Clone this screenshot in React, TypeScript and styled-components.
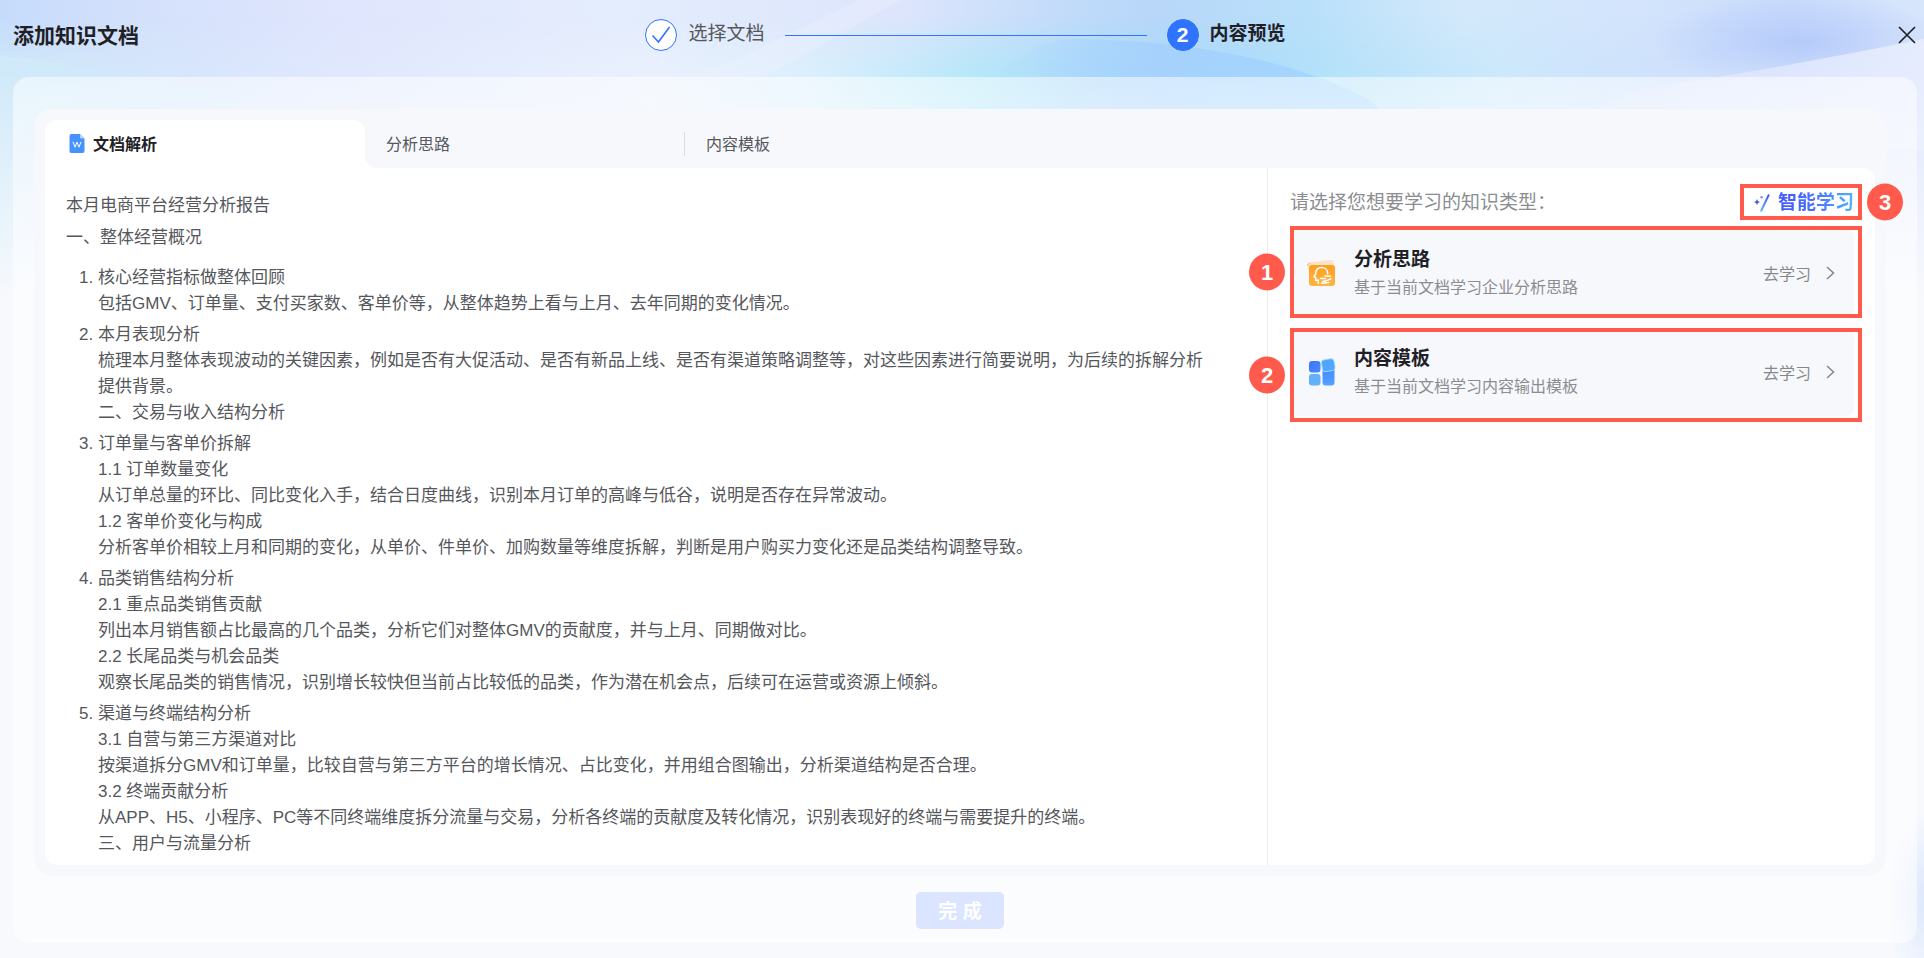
import React, { useState } from "react";
import styled, { createGlobalStyle, css } from "styled-components";

const GlobalStyle = createGlobalStyle`
  *, *::before, *::after { box-sizing: border-box; }
  body {
    margin: 0;
    background: #f7f9fd;
    color: #1f2126;
    font-family: "Liberation Sans", "Noto Sans CJK SC", sans-serif;
    font-size: 17px;
  }
  button { font: inherit; color: inherit; border: 0; padding: 0; background: none; cursor: pointer; }
  h1, h2, h3, p, ol { margin: 0; padding: 0; font-weight: 400; font-size: inherit; }
`;

const Page = styled.div`
  position: relative;
  min-height: 100vh;
  display: flex;
  flex-direction: column;
  isolation: isolate;
`;

const Backdrop = styled.svg`
  position: absolute;
  top: 0;
  left: 0;
  width: 100%;
  height: 100%;
  z-index: -1;
`;

const Header = styled.header`
  height: 77px;
  padding: 0 6px 7px 13px;
  display: grid;
  grid-template-columns: 1fr auto 1fr;
  align-items: center;
`;

const Title = styled.h1`
  padding-bottom: 3px;
  font-size: 21px;
  font-weight: 700;
`;

const Steps = styled.ol`
  display: flex;
  align-items: center;
  gap: 20px;
  list-style: none;
`;

const Step = styled.li<{ $current?: boolean }>`
  display: flex;
  align-items: center;
  gap: 11px;
  font-size: 19px;
  line-height: 32px;
  color: ${(p) => (p.$current ? "#1f2126" : "#55575c")};
  font-weight: ${(p) => (p.$current ? 700 : 400)};
`;

const StepLabel = styled.span`
  padding-bottom: 2px;
`;

const StepMark = styled.span<{ $current?: boolean }>`
  width: 32px;
  height: 32px;
  border-radius: 50%;
  border: 1px solid #2f73ff;
  background: ${(p) => (p.$current ? "#2f73ff" : "#fff")};
  color: #fff;
  font-size: 21px;
  font-weight: 700;
  display: flex;
  align-items: center;
  justify-content: center;
`;

const StepLine = styled.li`
  width: 362px;
  height: 1px;
  background: #2f73ff;
`;

const CloseButton = styled.button`
  justify-self: end;
  display: flex;
`;

const Shell = styled.main`
  flex: 1;
  margin: 0 7px 15px 13px;
  padding: 32px 31px 14px 21px;
  border-radius: 16px;
  background: rgba(255, 255, 255, 0.5);
  display: flex;
  flex-direction: column;
`;

const Workspace = styled.section`
  flex: 1;
  padding: 11px;
  border-radius: 18px;
  background: #f7f8fc;
  display: flex;
  flex-direction: column;
`;

const TabBar = styled.div`
  display: flex;
  height: 48px;
`;

const Tab = styled.button<{ $active?: boolean; $divided?: boolean }>`
  position: relative;
  width: 320px;
  padding: 0 21px 2px;
  display: flex;
  align-items: center;
  gap: 6px;
  font-size: 16px;
  color: #55575c;
  ${(p) =>
    p.$active &&
    css`
      background: #fff;
      color: #1f2126;
      font-weight: 700;
      border-radius: 12px 12px 0 0;
      &::after {
        content: "";
        position: absolute;
        left: 100%;
        bottom: 0;
        width: 12px;
        height: 12px;
        background: radial-gradient(circle at 100% 0, transparent 12px, #fff 12px);
      }
    `}
  ${(p) =>
    p.$divided &&
    css`
      &::after {
        content: "";
        position: absolute;
        right: 0;
        top: 12px;
        width: 1px;
        height: 24px;
        background: #dadce2;
      }
    `}
`;

const Panes = styled.div`
  flex: 1;
  display: grid;
  grid-template-columns: minmax(0, 1fr) 608px;
  background: #fff;
  border-radius: 0 12px 12px 12px;
`;

const Article = styled.article`
  padding: 25px 50px 7px 21px;
  font-size: 17px;
  line-height: 26px;
  color: #55575c;
`;

const Paragraph = styled.p`
  margin-bottom: 6px;
`;

const Outline = styled.ol`
  margin-top: 14px;
  padding-left: 32px;
  display: flex;
  flex-direction: column;
  gap: 5px;
`;

const OutlineLine = styled.span`
  display: block;
`;

const Learn = styled.aside`
  padding: 22px 21px 0 22px;
  border-left: 1px solid #ececef;
  display: flex;
  flex-direction: column;
`;

const LearnHead = styled.div`
  display: flex;
  justify-content: space-between;
  align-items: center;
  height: 26px;
  margin: 0 0 13px;
  color: #8b8d92;
`;

const LearnPrompt = styled.h2`
  font-size: 19px;
  line-height: 26px;
`;

const Marked = styled.div`
  position: relative;
`;

const SmartButton = styled.button`
  display: flex;
  align-items: center;
  gap: 7px;
  font-size: 19px;
  line-height: 26px;
  font-weight: 700;
`;

const SmartLabel = styled.span`
  color: transparent;
  background: linear-gradient(90deg, #4059ff, #4a6dff 45%, #4fb4ff);
  background-clip: text;
`;

const Cards = styled.div`
  display: flex;
  flex-direction: column;
  gap: 11px;
`;

const Card = styled.section`
  height: 88px;
  padding: 0 16px;
  border-radius: 8px;
  background: #f7f8fc;
  display: flex;
  align-items: center;
`;

const CardText = styled.div`
  flex: 1;
  margin-left: 18px;
`;

const CardTitle = styled.h3`
  font-size: 19px;
  line-height: 29px;
  font-weight: 700;
`;

const CardNote = styled.p`
  font-size: 16px;
  line-height: 28px;
  color: #8b8d92;
`;

const GoButton = styled.button`
  display: flex;
  align-items: center;
  gap: 11px;
  font-size: 16px;
  color: #85878c;
`;

const Callout = styled.div<{ $top: number; $bottom: number; $left?: number }>`
  position: absolute;
  top: ${(p) => -p.$top}px;
  right: -8px;
  bottom: ${(p) => -p.$bottom}px;
  left: ${(p) => -(p.$left ?? 0)}px;
  border: 4px solid #ff5a4c;
  pointer-events: none;
`;

const CalloutNumber = styled.span<{ $side: "left" | "right" }>`
  position: absolute;
  top: 50%;
  ${(p) => (p.$side === "left" ? "right" : "left")}: calc(100% + 9px);
  transform: translateY(-50%);
  width: 36px;
  height: 37px;
  border-radius: 50%;
  background: #ff5a4c;
  color: #fff;
  font-size: 22px;
  line-height: 38px;
  font-weight: 700;
  text-align: center;
`;

const Footer = styled.footer`
  padding-top: 16px;
  display: flex;
  justify-content: center;
`;

const DoneButton = styled.button`
  width: 88px;
  height: 37px;
  padding-bottom: 2px;
  border-radius: 5px;
  background: #dbe5ff;
  color: #fff;
  font-size: 19px;
  font-weight: 700;
`;

const sections: string[][] = [
  [
    "核心经营指标做整体回顾",
    "包括GMV、订单量、支付买家数、客单价等，从整体趋势上看与上月、去年同期的变化情况。",
  ],
  [
    "本月表现分析",
    "梳理本月整体表现波动的关键因素，例如是否有大促活动、是否有新品上线、是否有渠道策略调整等，对这些因素进行简要说明，为后续的拆解分析提供背景。",
    "二、交易与收入结构分析",
  ],
  [
    "订单量与客单价拆解",
    "1.1 订单数量变化",
    "从订单总量的环比、同比变化入手，结合日度曲线，识别本月订单的高峰与低谷，说明是否存在异常波动。",
    "1.2 客单价变化与构成",
    "分析客单价相较上月和同期的变化，从单价、件单价、加购数量等维度拆解，判断是用户购买力变化还是品类结构调整导致。",
  ],
  [
    "品类销售结构分析",
    "2.1 重点品类销售贡献",
    "列出本月销售额占比最高的几个品类，分析它们对整体GMV的贡献度，并与上月、同期做对比。",
    "2.2 长尾品类与机会品类",
    "观察长尾品类的销售情况，识别增长较快但当前占比较低的品类，作为潜在机会点，后续可在运营或资源上倾斜。",
  ],
  [
    "渠道与终端结构分析",
    "3.1 自营与第三方渠道对比",
    "按渠道拆分GMV和订单量，比较自营与第三方平台的增长情况、占比变化，并用组合图输出，分析渠道结构是否合理。",
    "3.2 终端贡献分析",
    "从APP、H5、小程序、PC等不同终端维度拆分流量与交易，分析各终端的贡献度及转化情况，识别表现好的终端与需要提升的终端。",
    "三、用户与流量分析",
  ],
];

const tabs = ["文档解析", "分析思路", "内容模板"];

function BackdropArt() {
  return (
    <Backdrop viewBox="0 0 1924 958" preserveAspectRatio="none" aria-hidden="true">
      <defs>
        <linearGradient id="sky">
          <stop offset="0" stopColor="#c6dbfb" />
          <stop offset="0.08" stopColor="#d5e1fc" />
          <stop offset="0.18" stopColor="#e0e6fd" />
          <stop offset="0.32" stopColor="#e4edfd" />
          <stop offset="0.47" stopColor="#dde5fc" />
          <stop offset="0.56" stopColor="#c0dbfa" />
          <stop offset="0.6" stopColor="#b8d7f9" />
          <stop offset="0.68" stopColor="#b9e0fa" />
          <stop offset="0.76" stopColor="#d3e9fb" />
          <stop offset="0.85" stopColor="#d3e4fc" />
          <stop offset="0.93" stopColor="#cbdcfc" />
          <stop offset="1" stopColor="#d8e6fc" />
        </linearGradient>
        <linearGradient id="horizon">
          <stop offset="0" stopColor="#d0eaf9" />
          <stop offset="0.1" stopColor="#d7e6fb" />
          <stop offset="0.18" stopColor="#e0e8fd" />
          <stop offset="0.34" stopColor="#eaf1fd" />
          <stop offset="0.42" stopColor="#daf0fc" />
          <stop offset="0.51" stopColor="#b2e7f8" />
          <stop offset="0.57" stopColor="#a9daf9" />
          <stop offset="0.65" stopColor="#aadcfb" />
          <stop offset="0.7" stopColor="#b5e2f9" />
          <stop offset="0.78" stopColor="#cbe8fb" />
          <stop offset="0.87" stopColor="#cfe0fc" />
          <stop offset="1" stopColor="#dfe7fd" />
        </linearGradient>
        <linearGradient id="descend" x1="0" y1="0" x2="0" y2="1">
          <stop offset="0.15" stopColor="#fff" stopOpacity="0" />
          <stop offset="0.8" stopColor="#fff" />
        </linearGradient>
        <mask id="descendMask">
          <rect width="1924" height="100" fill="url(#descend)" />
          <rect y="100" width="1924" height="300" fill="#fff" />
        </mask>
        <linearGradient id="settle" x1="0" y1="0" x2="0" y2="1">
          <stop offset="0" stopColor="#f7f9fd" stopOpacity="0" />
          <stop offset="1" stopColor="#f7f9fd" />
        </linearGradient>
        <linearGradient id="wave">
          <stop offset="0" stopColor="#9fd2fb" stopOpacity="0" />
          <stop offset="0.15" stopColor="#a3d2fd" stopOpacity="0.1" />
          <stop offset="0.45" stopColor="#a3cffd" stopOpacity="0.8" />
          <stop offset="1" stopColor="#a0d6ff" stopOpacity="0.9" />
        </linearGradient>
        <linearGradient id="ridge">
          <stop offset="0" stopColor="#dfe7fd" stopOpacity="0.2" />
          <stop offset="1" stopColor="#e6ecfe" />
        </linearGradient>
        <linearGradient id="mist" x1="0" y1="0" x2="0" y2="1">
          <stop offset="0" stopColor="#d0eafa" />
          <stop offset="1" stopColor="#d0eafa" stopOpacity="0.2" />
        </linearGradient>
        <radialGradient id="glow">
          <stop offset="0" stopColor="#dbe7fd" />
          <stop offset="1" stopColor="#dbe7fd" stopOpacity="0" />
        </radialGradient>
        <radialGradient id="shade">
          <stop offset="0" stopColor="#b5cbfa" />
          <stop offset="1" stopColor="#b5cbfa" stopOpacity="0" />
        </radialGradient>
      </defs>
      <rect width="1924" height="958" fill="#f7f9fd" />
      <rect width="1924" height="300" fill="url(#sky)" />
      <rect width="1924" height="300" fill="url(#horizon)" mask="url(#descendMask)" />
      <ellipse cx="1800" cy="42" rx="150" ry="48" fill="url(#shade)" />
      <path d="M0 56Q60 61 110 73T240 96V130H0Z" fill="url(#mist)" />
      <path d="M860 0 690 80H760L900 0Z" fill="#f3f2ff" opacity="0.3" />
      <path d="M960 130Q1010 39 1075 39Q1260 42 1370 100L1400 130Z" fill="url(#wave)" />
      <path d="M1640 90Q1790 66 1924 39V150H1500Z" fill="url(#ridge)" />
      <rect y="70" width="1924" height="231" fill="url(#settle)" />
      <ellipse cx="1930" cy="900" rx="45" ry="90" fill="url(#glow)" />
    </Backdrop>
  );
}

function WordIcon() {
  return (
    <svg width="21" height="21" viewBox="0 0 21 21" aria-hidden="true">
      <path d="M5.5 1H14l4.5 4.5V18a2 2 0 0 1-2 2h-11a2 2 0 0 1-2-2V3a2 2 0 0 1 2-2Z" fill="#4493ff" />
      <path d="M14 1l4.500 4.500H15.500A1.500 1.500 0 0 1 14 4Z" fill="#b9d7ff" />
      <path d="M7 8.800l2 5.400L11 9.200l2 5 2-5.400" fill="none" stroke="#fff" strokeWidth="1" strokeLinejoin="round" />
    </svg>
  );
}

function WandIcon() {
  return (
    <svg width="18" height="20" viewBox="0 0 18 20" aria-hidden="true">
      <defs>
        <linearGradient id="wand" x1="0" y1="0" x2="0" y2="1">
          <stop offset="0" stopColor="#4b55e8" />
          <stop offset="1" stopColor="#5cb8f5" />
        </linearGradient>
      </defs>
      <path d="M15.600 2.200 8.200 17.800" stroke="url(#wand)" strokeWidth="2" strokeLinecap="round" />
      <path d="M4 5.700c.5 2.200 1.200 2.900 3.300 3.400-2.100.5-2.800 1.200-3.300 3.400-.5-2.200-1.200-2.900-3.300-3.400 2.100-.5 2.800-1.200 3.300-3.400Z" fill="#4557e6" />
      <circle cx="8.600" cy="4.200" r="1.200" fill="#7f8cf2" />
    </svg>
  );
}

function ThinkingIcon() {
  return (
    <svg width="30" height="30" viewBox="0 0 30 30" aria-hidden="true">
      <defs>
        <linearGradient id="amber" x1="0" y1="0" x2="0" y2="1">
          <stop offset="0" stopColor="#ff9f1f" />
          <stop offset="1" stopColor="#ffb445" />
        </linearGradient>
      </defs>
      <path d="M1.500 7.500Q1.300 5 3.800 4.600L24.500 2Q27.500 1.600 27.700 4.500L28 12 3 13Z" fill="#fae3c6" />
      <path d="M1.500 8Q1.300 5.500 4 5.200" fill="none" stroke="#ffb95c" />
      <rect x="3" y="7" width="26" height="21" rx="3" fill="url(#amber)" />
      <path d="M12.300 25.200V22l-2.600.4V19.500l-1.700-.8L9.600 16C9.800 11.800 12.300 9.600 15.500 9.600c3.900 0 6.200 2.700 6.200 6.200" fill="none" stroke="#fff" strokeWidth="1.500" strokeLinejoin="round" strokeLinecap="round" />
      <path d="M14.500 20.500h5.200M19 18l5.500.3M16.500 23.400l3-.3 5.500-2.300M15.500 25.200l7.500-.8" fill="none" stroke="#fff" strokeWidth="1.500" strokeLinecap="round" />
    </svg>
  );
}

function TemplateIcon() {
  return (
    <svg width="30" height="30" viewBox="0 0 30 30" aria-hidden="true">
      <defs>
        <linearGradient id="deep" x1="0" y1="0" x2="1" y2="1">
          <stop offset="0" stopColor="#3b74fb" />
          <stop offset="1" stopColor="#4a8bff" />
        </linearGradient>
        <linearGradient id="tall" x1="0" y1="0" x2="0" y2="1">
          <stop offset="0" stopColor="#3c7dff" />
          <stop offset="1" stopColor="#55a3ff" />
        </linearGradient>
      </defs>
      <rect x="3" y="4" width="11.500" height="11.500" rx="3" fill="url(#deep)" />
      <rect x="3" y="17" width="11.500" height="11.500" rx="3" fill="#62b1f9" />
      <rect x="16.500" y="4" width="12" height="24.500" rx="3" fill="url(#tall)" />
      <rect x="15.800" y="2.200" width="12.800" height="12" rx="3" transform="rotate(-9 22 8)" fill="#4fa6ff" stroke="#a6dcff" strokeWidth="0.900" />
    </svg>
  );
}

function ChevronIcon() {
  return (
    <svg width="16" height="18" viewBox="0 0 16 18" aria-hidden="true">
      <path d="M5 3l6.500 6L5 15" fill="none" stroke="#85878c" strokeWidth="1.500" />
    </svg>
  );
}

const cards = [
  { title: "分析思路", note: "基于当前文档学习企业分析思路", icon: <ThinkingIcon />, top: 3, bottom: 1 },
  { title: "内容模板", note: "基于当前文档学习内容输出模板", icon: <TemplateIcon />, top: 0, bottom: 6 },
];

export default function App() {
  const [active, setActive] = useState(0);

  return (
    <Page>
      <GlobalStyle />
      <BackdropArt />
      <Header>
        <Title>添加知识文档</Title>
        <Steps>
          <Step>
            <StepMark>
              <svg width="22" height="22" viewBox="0 0 22 22" aria-hidden="true">
                <path d="M2.500 11.500 8.500 18 19.500 3" fill="none" stroke="#2f73ff" strokeWidth="1.600" />
              </svg>
            </StepMark>
            <StepLabel>选择文档</StepLabel>
          </Step>
          <StepLine aria-hidden="true" />
          <Step $current aria-current="step">
            <StepMark $current>2</StepMark>
            <StepLabel>内容预览</StepLabel>
          </Step>
        </Steps>
        <CloseButton type="button" aria-label="关闭">
          <svg width="22" height="22" viewBox="0 0 22 22" aria-hidden="true">
            <path d="M3 3l16 16M19 3 3 19" stroke="#1f2126" strokeWidth="1.700" />
          </svg>
        </CloseButton>
      </Header>
      <Shell>
        <Workspace>
          <TabBar role="tablist">
            {tabs.map((label, i) => (
              <Tab
                key={label}
                type="button"
                role="tab"
                aria-selected={active === i}
                $active={active === i}
                $divided={i === 1 && active === 0}
                onClick={() => setActive(i)}
              >
                {i === 0 && <WordIcon />}
                {label}
              </Tab>
            ))}
          </TabBar>
          <Panes>
            <Article>
              <Paragraph>本月电商平台经营分析报告</Paragraph>
              <Paragraph>一、整体经营概况</Paragraph>
              <Outline>
                {sections.map((lines) => (
                  <li key={lines[0]}>
                    {lines.map((line) => (
                      <OutlineLine key={line}>{line}</OutlineLine>
                    ))}
                  </li>
                ))}
              </Outline>
            </Article>
            <Learn>
              <LearnHead>
                <LearnPrompt>请选择您想要学习的知识类型：</LearnPrompt>
                <Marked>
                  <SmartButton type="button">
                    <WandIcon />
                    <SmartLabel>智能学习</SmartLabel>
                  </SmartButton>
                  <Callout $top={6} $bottom={4} $left={13}>
                    <CalloutNumber $side="right">3</CalloutNumber>
                  </Callout>
                </Marked>
              </LearnHead>
              <Cards>
                {cards.map((card, i) => (
                  <Marked key={card.title}>
                    <Card>
                      {card.icon}
                      <CardText>
                        <CardTitle>{card.title}</CardTitle>
                        <CardNote>{card.note}</CardNote>
                      </CardText>
                      <GoButton type="button">
                        去学习
                        <ChevronIcon />
                      </GoButton>
                    </Card>
                    <Callout $top={card.top} $bottom={card.bottom}>
                      <CalloutNumber $side="left">{i + 1}</CalloutNumber>
                    </Callout>
                  </Marked>
                ))}
              </Cards>
            </Learn>
          </Panes>
        </Workspace>
        <Footer>
          <DoneButton type="button" disabled>
            完 成
          </DoneButton>
        </Footer>
      </Shell>
    </Page>
  );
}
